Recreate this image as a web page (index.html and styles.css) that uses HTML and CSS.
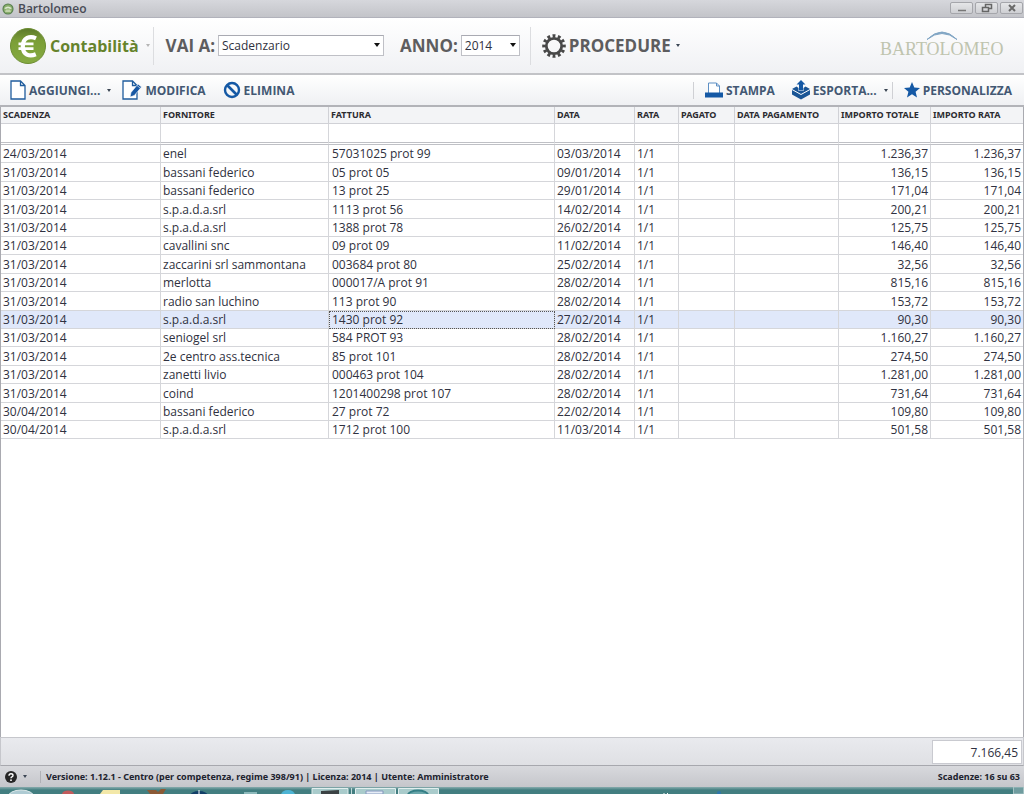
FILE: index.html
```html
<!DOCTYPE html>
<html lang="it">
<head>
<meta charset="utf-8">
<title>Bartolomeo</title>
<link rel="stylesheet" href="styles.css">
</head>
<body>
<div class="app">
  <header class="titlebar">
    <svg class="app-icon" viewBox="0 0 14 14" aria-hidden="true"><circle cx="7" cy="7" r="6.500" fill="#587f50"/><circle cx="7" cy="7" r="5.200" fill="#8aae6c"/><path d="M2.500 6Q7 2 11.500 6L9.500 7Q7 5 4.500 7Z" fill="#dce8d0"/><path d="M4.500 7.500h5l1 3h-7z" fill="#c0d3a8"/></svg>
    <h1 class="title">Bartolomeo</h1>
    <div class="win-buttons">
      <button class="win-btn" aria-label="Riduci"><svg viewBox="0 0 12 10"><path d="M2 7.500h8" stroke="#777" stroke-width="1.500"/></svg></button>
      <button class="win-btn" aria-label="Ripristina"><svg viewBox="0 0 12 10"><path d="M4.500 4V1.500h6v4H8M1.500 4.500h6v4h-6z" fill="none" stroke="#666" stroke-width="1.500"/></svg></button>
      <button class="win-btn" aria-label="Chiudi"><svg viewBox="0 0 12 10"><path d="M3 2l6 6M9 2L3 8" stroke="#6a6a6a" stroke-width="2"/></svg></button>
    </div>
  </header>

  <nav class="mainbar">
    <button class="module">
      <svg class="euro" viewBox="0 0 36 36" aria-hidden="true">
        <defs><linearGradient id="green" x1="0" y1="0" x2="0" y2="1"><stop offset="0" stop-color="#5c792a"/><stop offset="0.350" stop-color="#7b9e37"/><stop offset="1" stop-color="#86ab42"/></linearGradient></defs>
        <circle cx="18" cy="18" r="17.500" fill="url(#green)" stroke="#6d8d33"/>
        <path d="M26 10.300C20 7.500 12.800 9.500 12.800 18.500C12.800 27 19.500 28.800 25.800 26.300" fill="none" stroke="#fff" stroke-width="4.200"/>
        <path d="M8.500 14.500H23.500v2.800H8.500zM8.500 19.300H23.500v2.800H8.500z" fill="#fff"/>
      </svg>
      <span>Contabilità</span><i class="caret pale"></i>
    </button>
    <i class="divider tall"></i>
    <label class="field-label" for="vai">VAI A:</label>
    <span class="combo wide"><select id="vai"><option>Scadenzario</option></select></span>
    <label class="field-label anno" for="anno">ANNO:</label>
    <span class="combo year"><select id="anno"><option>2014</option></select></span>
    <i class="divider tall after-year"></i>
    <button class="procedures">
      <svg class="gear" viewBox="0 0 24 24" aria-hidden="true"><circle cx="12" cy="12" r="7.700" fill="none" stroke="#484848" stroke-width="2.800"/><circle cx="12" cy="12" r="10.100" fill="none" stroke="#484848" stroke-width="3.400" pathLength="144" stroke-dasharray="6.500 5.500" stroke-dashoffset="3.250"/></svg>
      <span>PROCEDURE</span><i class="caret"></i>
    </button>
    <svg class="brand" viewBox="0 0 130 30" role="img" aria-label="Bartolomeo"><text x="2" y="24" class="brand-text" fill="#bfc4ae">BARTOLOMEO</text><path d="M49 8.500Q64 -6.500 79 8.500Q64 -3.500 49 8.500Z" fill="#80a5c4" stroke="#80a5c4"/></svg>
  </nav>

  <div class="toolbar">
    <button class="tool add"><svg class="page" viewBox="0 0 16 20"><path d="M1 1h9.500L15 5.500V19H1zM10.500 1v4.500H15" fill="#fff" stroke="#1f5c9d" stroke-width="1.300"/></svg><span>AGGIUNGI...</span><i class="caret"></i></button>
    <button class="tool edit"><svg class="page-edit" viewBox="0 0 20 20"><path d="M1 1h9.500L15 5.500V19H1zM10.500 1v4.500H15" fill="#fff" stroke="#1f5c9d" stroke-width="1.300"/><path d="M8 17l1-4.500 7-8.500 3.500 3-7.200 8.500zM15 5.500l3.300 2.700" fill="#1757a3" stroke="#fff" stroke-width=".6"/></svg><span>MODIFICA</span></button>
    <button class="tool remove"><svg class="ban" viewBox="0 0 18 18"><circle cx="9" cy="9" r="7" fill="none" stroke="#1559a5" stroke-width="2.400"/><path d="M4 4l10 10" stroke="#1559a5" stroke-width="2.600"/></svg><span>ELIMINA</span></button>
    <i class="divider push"></i>
    <button class="tool print"><svg class="printer" viewBox="0 0 18 16"><path d="M3.500 11V1h8l3 3v7M11.500 1v3h3" fill="#fff" stroke="#5d8fc4"/><path d="M0 10.500h18V15.500H0z" fill="#1559a5"/></svg><span>STAMPA</span></button>
    <button class="tool export"><svg class="box" viewBox="0 0 18 20"><path d="M0 9L4.500 6.500 6.500 8v3h5V8l2-1.500L18 9V14.500L9 19.500 0 14.500z" fill="#1a5595"/><path d="M0 9.500L9 14.500 18 9.500" fill="none" stroke="#fff"/><path d="M9 0l4.500 4.500H11V10.500H7V4.500H4.500z" fill="#1559a5"/></svg><span>ESPORTA...</span><i class="caret"></i></button>
    <i class="divider"></i>
    <button class="tool customize"><svg class="star" viewBox="0 0 16 16"><path d="M8 0l2.300 5.600 5.700.4-4.400 3.700L13 15.500 8 12.300 3 15.500l1.400-5.800L0 6l5.700-.4z" fill="#1559a5"/></svg><span>PERSONALIZZA</span></button>
  </div>

  <main class="grid-area">
    <table class="grid">
      <colgroup><col class="c-due"><col class="c-supplier"><col class="c-invoice"><col class="c-date"><col class="c-rate"><col class="c-paid"><col class="c-paydate"><col class="c-amount"><col class="c-amount"></colgroup>
      <thead>
        <tr class="heads"><th>SCADENZA</th><th>FORNITORE</th><th>FATTURA</th><th>DATA</th><th>RATA</th><th>PAGATO</th><th>DATA PAGAMENTO</th><th>IMPORTO TOTALE</th><th>IMPORTO RATA</th></tr>
        <tr class="filters"><td><input aria-label="Filtra scadenza"></td><td><input aria-label="Filtra fornitore"></td><td><input aria-label="Filtra fattura"></td><td><input aria-label="Filtra data"></td><td><input aria-label="Filtra rata"></td><td><input aria-label="Filtra pagato"></td><td><input aria-label="Filtra data pagamento"></td><td><input aria-label="Filtra importo totale"></td><td><input aria-label="Filtra importo rata"></td></tr>
      </thead>
      <tbody>
        <tr><td>24/03/2014</td><td>enel</td><td>57031025 prot 99</td><td>03/03/2014</td><td>1/1</td><td></td><td></td><td>1.236,37</td><td>1.236,37</td></tr>
        <tr><td>31/03/2014</td><td>bassani federico</td><td>05 prot 05</td><td>09/01/2014</td><td>1/1</td><td></td><td></td><td>136,15</td><td>136,15</td></tr>
        <tr><td>31/03/2014</td><td>bassani federico</td><td>13 prot 25</td><td>29/01/2014</td><td>1/1</td><td></td><td></td><td>171,04</td><td>171,04</td></tr>
        <tr><td>31/03/2014</td><td>s.p.a.d.a.srl</td><td>1113 prot 56</td><td>14/02/2014</td><td>1/1</td><td></td><td></td><td>200,21</td><td>200,21</td></tr>
        <tr><td>31/03/2014</td><td>s.p.a.d.a.srl</td><td>1388 prot 78</td><td>26/02/2014</td><td>1/1</td><td></td><td></td><td>125,75</td><td>125,75</td></tr>
        <tr><td>31/03/2014</td><td>cavallini snc</td><td>09 prot 09</td><td>11/02/2014</td><td>1/1</td><td></td><td></td><td>146,40</td><td>146,40</td></tr>
        <tr><td>31/03/2014</td><td>zaccarini srl sammontana</td><td>003684 prot 80</td><td>25/02/2014</td><td>1/1</td><td></td><td></td><td>32,56</td><td>32,56</td></tr>
        <tr><td>31/03/2014</td><td>merlotta</td><td>000017/A prot 91</td><td>28/02/2014</td><td>1/1</td><td></td><td></td><td>815,16</td><td>815,16</td></tr>
        <tr><td>31/03/2014</td><td>radio san luchino</td><td>113 prot 90</td><td>28/02/2014</td><td>1/1</td><td></td><td></td><td>153,72</td><td>153,72</td></tr>
        <tr class="selected"><td>31/03/2014</td><td>s.p.a.d.a.srl</td><td class="focus">1430 prot 92</td><td>27/02/2014</td><td>1/1</td><td></td><td></td><td>90,30</td><td>90,30</td></tr>
        <tr><td>31/03/2014</td><td>seniogel srl</td><td>584 PROT 93</td><td>28/02/2014</td><td>1/1</td><td></td><td></td><td>1.160,27</td><td>1.160,27</td></tr>
        <tr><td>31/03/2014</td><td>2e centro ass.tecnica</td><td>85 prot 101</td><td>28/02/2014</td><td>1/1</td><td></td><td></td><td>274,50</td><td>274,50</td></tr>
        <tr><td>31/03/2014</td><td>zanetti livio</td><td>000463 prot 104</td><td>28/02/2014</td><td>1/1</td><td></td><td></td><td>1.281,00</td><td>1.281,00</td></tr>
        <tr><td>31/03/2014</td><td>coind</td><td>1201400298 prot 107</td><td>28/02/2014</td><td>1/1</td><td></td><td></td><td>731,64</td><td>731,64</td></tr>
        <tr><td>30/04/2014</td><td>bassani federico</td><td>27 prot 72</td><td>22/02/2014</td><td>1/1</td><td></td><td></td><td>109,80</td><td>109,80</td></tr>
        <tr><td>30/04/2014</td><td>s.p.a.d.a.srl</td><td>1712 prot 100</td><td>11/03/2014</td><td>1/1</td><td></td><td></td><td>501,58</td><td>501,58</td></tr>
      </tbody>
    </table>
  </main>

  <div class="totals"><output class="total">7.166,45</output></div>

  <footer class="status">
    <button class="help" aria-label="Aiuto"><svg viewBox="0 0 12 12"><circle cx="6" cy="6" r="6" fill="#262626"/><path d="M4 4.700Q4 2.800 6 2.800T8 4.500Q8 5.400 6.900 5.900Q6 6.300 6 7.300" fill="none" stroke="#fff" stroke-width="1.400"/><circle cx="6" cy="9.200" r=".9" fill="#fff"/></svg><i class="caret"></i></button>
    <i class="divider"></i>
    <span>Versione: 1.12.1 - Centro (per competenza, regime 398/91) | Licenza: 2014 | Utente: Amministratore</span>
    <span class="count">Scadenze: 16 su 63</span>
  </footer>

  <div class="taskbar" aria-hidden="true">
    <svg class="task-icons" viewBox="0 0 440 7">
      <ellipse cx="21" cy="10" rx="13" ry="7" fill="#aecbd3" stroke="#dce9ea"/>
      <ellipse cx="68" cy="7" rx="6" ry="3.500" fill="#c25b5c"/>
      <path d="M100 7l3-4h17v4z" fill="#f3e8a8"/>
      <path d="M147 3h9l2 2 3-3h5l-3 5h-13z" fill="#8b5a36"/>
      <ellipse cx="199" cy="9" rx="9" ry="5" fill="#123f68"/><path d="M199 3v4" stroke="#fff"/>
      <path d="M244 5h13v2h-13z" fill="#8cb9bb"/>
      <ellipse cx="288" cy="8" rx="7" ry="5" fill="#4db4d4"/>
      <path d="M312 7V1.500h36V7M355.500 7V1.500h40V7M398.500 7V1.500h40V7" fill="#a9cbcb" stroke="#e1eeee"/>
      <path d="M321 4l18-1v4h-18z" fill="#3b4244"/><path d="M366 4h17v3h-17z" fill="#e6edf6" stroke="#8296bd"/>
      <path d="M351.500 1v6" stroke="#c1dada"/>
      <ellipse cx="418" cy="8" rx="10" ry="4.500" fill="#69a6aa" stroke="#347e85" stroke-width="2"/>
    </svg>
    <svg class="task-tray" viewBox="0 0 376 7"><path d="M16 6v1M19.500 6v1" stroke="#fff"/><circle cx="71" cy="6" r="2" fill="#2f75ab"/><path d="M365.500 7V0h10v7z" fill="#709c9f" stroke="#a4c2c3"/></svg>
  </div>
</div>
</body>
</html>
```
FILE: styles.css
```css
* { box-sizing: border-box; }
body { margin: 0; font-family: "Open Sans", "Noto Sans", sans-serif; font-size: 12px; color: #2f3140; }
button { border: 0; padding: 0; background: none; font: inherit; color: inherit; display: flex; align-items: center; white-space: nowrap; }
svg { display: block; flex: none; }
.app { display: flex; flex-direction: column; height: 100vh; background: #fff; }

.titlebar { flex: none; display: flex; align-items: center; height: 18px; padding: 0 1px 0 2px; background: linear-gradient(#d6d7dc, #c3c4c9); border-bottom: 1px solid #b1b2bb; }
.app-icon { width: 12px; height: 12px; }
.title { margin: 0 auto 0 4px; font-size: 12px; line-height: 16px; font-weight: 600; color: #474a55; }
.win-buttons { display: flex; gap: 2px; align-self: flex-start; padding-top: 2px; }
.win-btn { width: 23px; height: 12px; justify-content: center; border: 1px solid #a5a6ab; border-radius: 2px; background: linear-gradient(#e5e6e8, #cecfd3); }
.win-btn svg { width: 12px; height: 10px; }

.caret { flex: none; width: 0; height: 0; border: 2px solid transparent; border-top: 3px solid #3c4654; border-bottom: 0; }
.caret.pale { border-top-color: #b5b5b5; }
.divider { flex: none; width: 1px; height: 17px; background: #cfd0d4; }
.divider.tall { height: 38px; background: #dcdde0; }

.mainbar { flex: none; display: flex; align-items: center; height: 57px; padding: 0 16px 0 10px; background: linear-gradient(#fff, #f0f1f4); border-bottom: 2px solid #c2c3c7; }
.module { gap: 4px; font-size: 16px; font-weight: 700; color: #65832c; }
.module .caret { margin: 0 3px; }
.euro { width: 36px; height: 36px; }
.field-label { margin: 0 3px 0 12px; font-size: 17px; font-weight: 700; color: #5d5d5f; white-space: nowrap; }
.field-label.anno { margin-left: 16px; }
.combo { position: relative; height: 21px; }
.combo.wide { width: 166px; }
.combo.year { width: 59px; }
.combo select { appearance: none; display: block; width: 100%; height: 21px; padding: 0 3px; border: 1px solid #bfc0c6; border-top-color: #a9aab2; border-radius: 0; background: #fff; font: inherit; color: #2f3140; }
.combo::after { content: ""; position: absolute; right: 4px; top: 8px; border: 3px solid transparent; border-top: 4px solid #111; border-bottom: 0; pointer-events: none; }
.after-year { margin-left: 10px; }
.procedures { margin-left: 11px; gap: 3px; font-size: 17px; font-weight: 700; color: #5d5d5f; }
.procedures .caret { margin-left: 2px; }
.gear { width: 24px; height: 24px; }
.brand { width: 130px; height: 30px; margin-left: auto; }
.brand-text { font-family: "Liberation Serif", serif; font-size: 18px; }

.toolbar { flex: none; display: flex; align-items: center; height: 32px; padding: 0 12px 0 10px; background: linear-gradient(#fff, #eff0f3); border-bottom: 2px solid #b2b3b8; }
.tool { gap: 3px; font-size: 12px; font-weight: 700; color: #435873; }
.add .caret { margin-left: 4px; }
.page { width: 16px; height: 20px; }
.edit { margin-left: 11px; }
.page-edit { width: 20px; height: 20px; }
.remove { margin-left: 17px; }
.ban { width: 18px; height: 18px; }
.push { margin-left: auto; }
.print { margin-left: 11px; }
.printer { width: 18px; height: 16px; }
.export { margin: 0 4px 0 17px; }
.export .caret { margin-left: 4px; }
.box { width: 18px; height: 20px; }
.customize { margin-left: 11px; }
.star { width: 16px; height: 16px; }

.grid-area { flex: 1; min-height: 0; overflow: hidden; border: 1px solid #a9aab0; border-width: 0 1px; }
.grid { width: 100%; table-layout: fixed; border-collapse: separate; border-spacing: 0; }
.c-due { width: 160px; }
.c-supplier { width: 168px; }
.c-date { width: 80px; }
.c-rate { width: 44px; }
.c-paid { width: 56px; }
.c-paydate { width: 104px; }
.c-amount { width: 92px; }
.grid th { height: 17px; padding: 0 2px; text-align: left; font-family: "Noto Sans", sans-serif; font-size: 9px; line-height: 16px; font-weight: 700; color: #2b2b30; white-space: nowrap; background: #f3f4f6; border: solid #d0d1d6; border-width: 0 1px 1px 0; }
.grid td { height: 18px; padding: 1px 2px 0; line-height: 16px; white-space: nowrap; border: solid #d5d6da; border-width: 0 1px 1px 0; }
.grid tr > :last-child { border-right: 0; }
.grid tbody td:nth-child(3) { padding-left: 3px; }
.grid .filters td { height: 21px; padding: 0; border-bottom: 3px double #bfc0c5; }
.filters input { display: block; width: 100%; height: 17px; padding: 0 2px; border: 0; background: #fff; font: inherit; }
.grid tbody tr:nth-child(5n+2) td, .grid tbody tr:nth-child(5n+4) td { height: 19px; }
.grid tbody td:nth-child(n+8) { text-align: right; }
.selected { background: #e0e8fa; }
.grid td.focus { outline: 1px dotted #555; outline-offset: -1px; }

.totals { flex: none; display: flex; justify-content: flex-end; height: 29px; padding: 2px 1px 1px; background: linear-gradient(#e9eaee, #dfe0e4); border: 1px solid #c6c7cc; border-bottom-color: #a7a8ae; }
.total { width: 90px; height: 24px; padding: 0 3px; text-align: right; line-height: 23px; background: #fff; border: 1px solid #c9cad0; }

.status { flex: none; display: flex; align-items: center; height: 21px; padding: 0 4px 0 5px; background: linear-gradient(#d8d9dd, #c5c6cb); font-family: "Noto Sans", sans-serif; font-size: 9px; font-weight: 700; color: #20222e; white-space: nowrap; }
.help { gap: 6px; }
.help svg { width: 12px; height: 12px; }
.status .divider { height: 12px; margin: 0 5px 0 13px; background: #b0b1b6; }
.count { margin-left: auto; }
.taskbar { flex: none; display: flex; justify-content: space-between; height: 7px; overflow: hidden; background: linear-gradient(#87abad, #427e80 3px); }
.task-icons { width: 440px; height: 7px; }
.task-tray { width: 376px; height: 7px; }
```
